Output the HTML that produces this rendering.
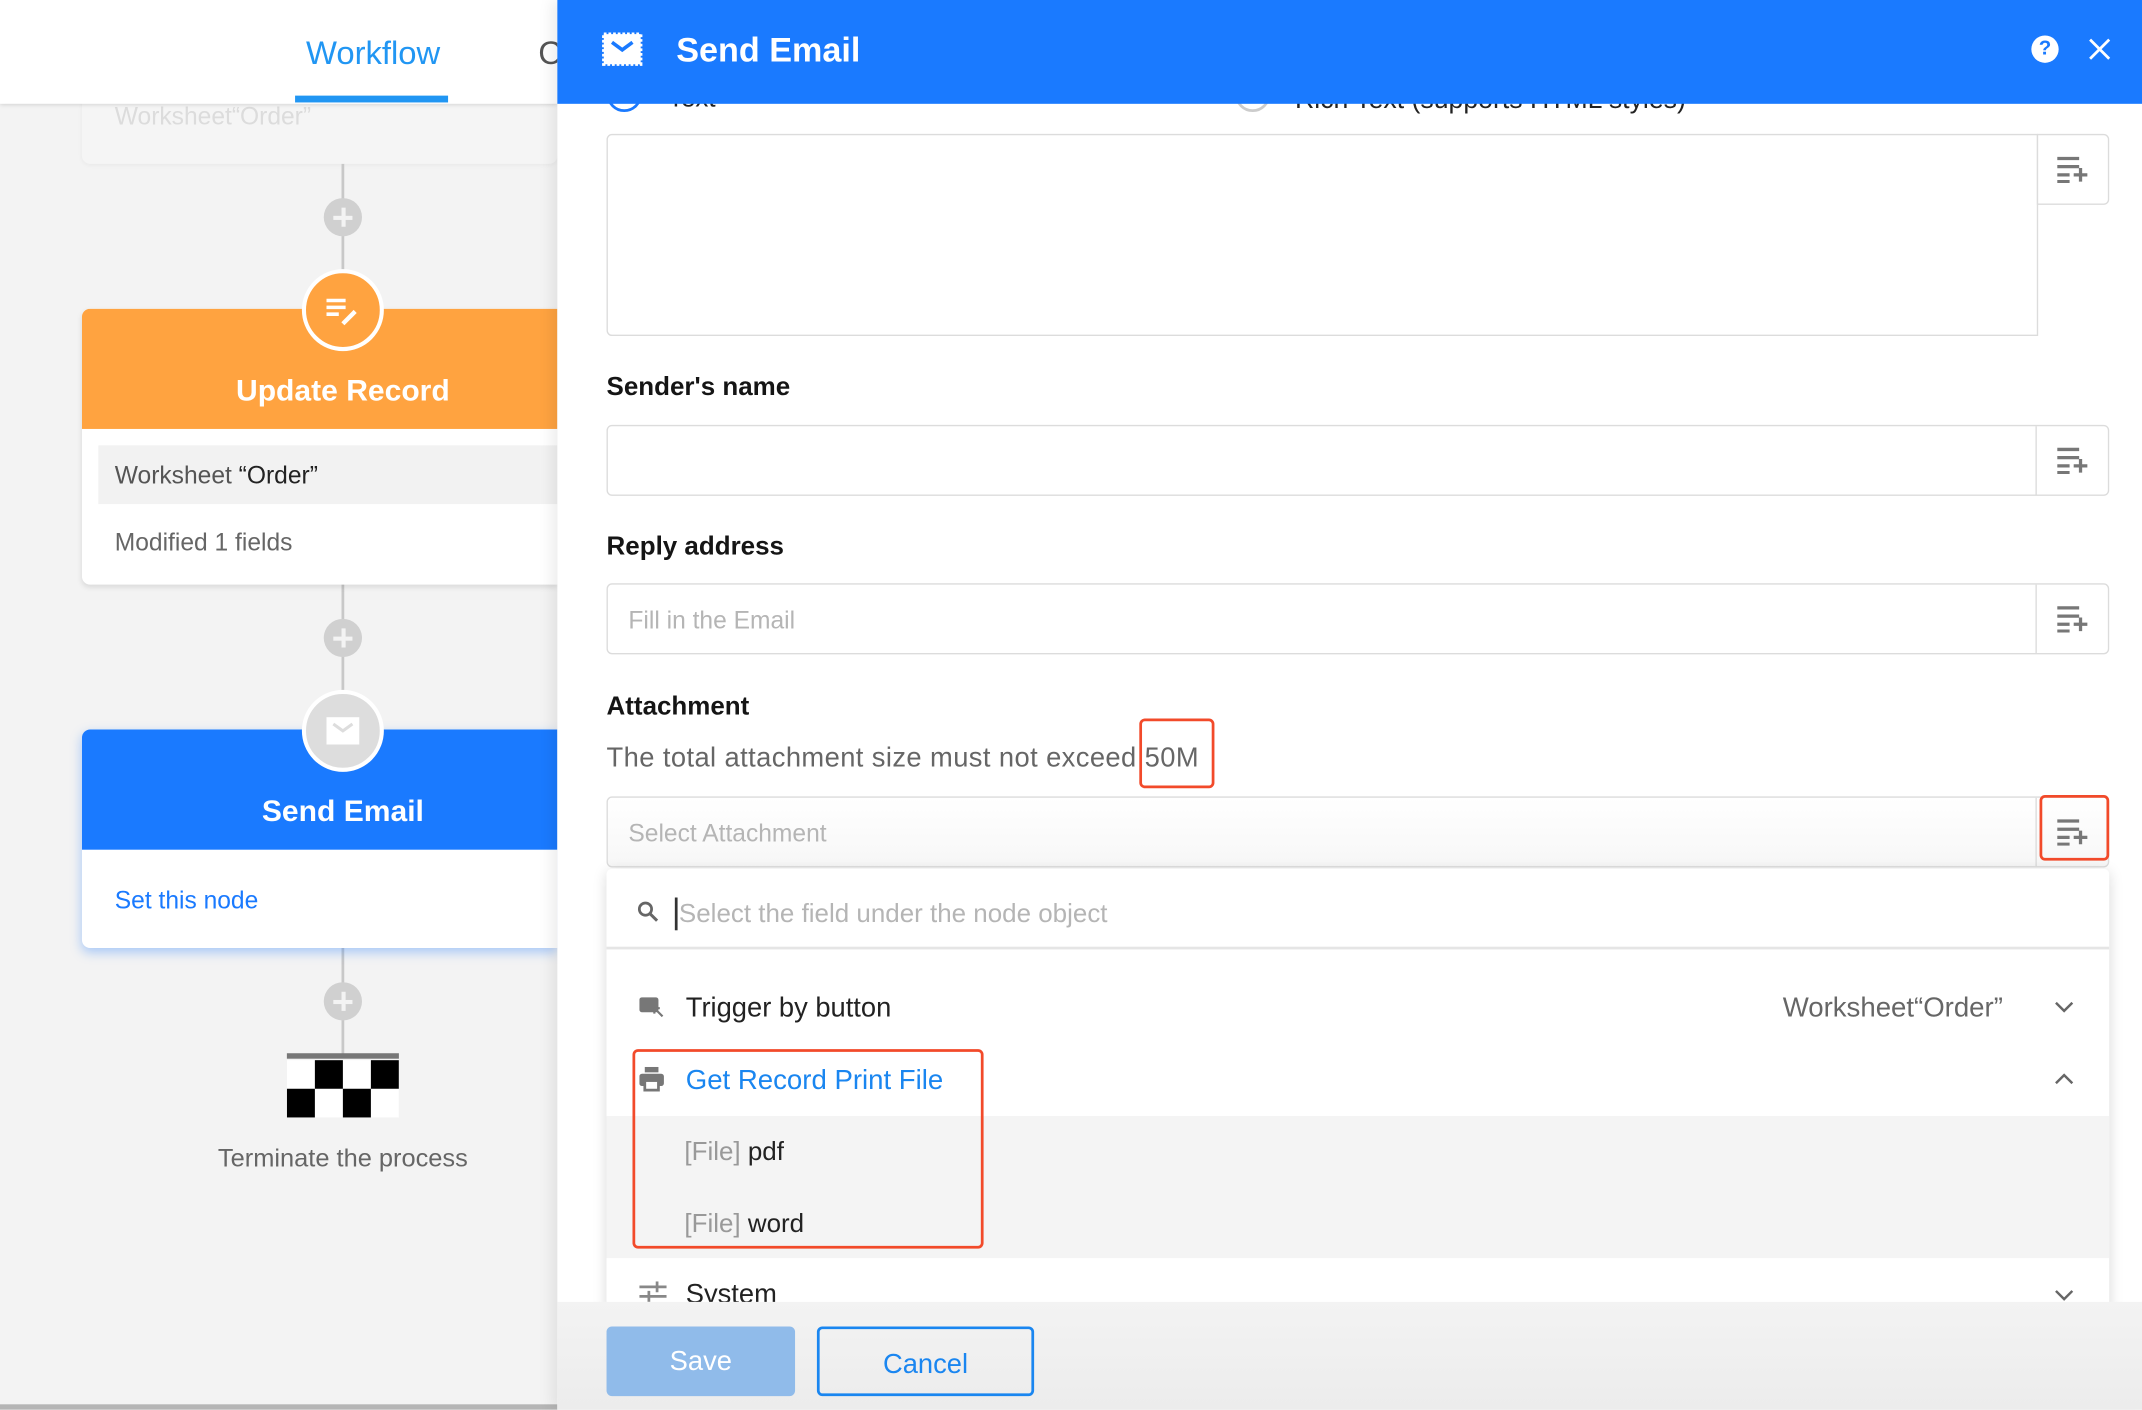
<!DOCTYPE html>
<html><head><meta charset="utf-8"><style>
*{margin:0;padding:0;box-sizing:border-box}
html,body{width:2142px;height:1410px;overflow:hidden;background:#f3f3f3}
#s{position:absolute;left:0;top:0;width:1568px;height:1032px;transform:scale(1.36607);transform-origin:0 0;font-family:"Liberation Sans",Arial,sans-serif;overflow:hidden}
.a{position:absolute}
.t{position:absolute;white-space:nowrap}
.plus{position:absolute;width:28px;height:28px;border-radius:50%;background:#d0d0d0}
.plus:before,.plus:after{content:"";position:absolute;background:#f3f3f3}
.plus:before{left:7px;top:12.5px;width:14px;height:3px}
.plus:after{left:12.5px;top:7px;width:3px;height:14px}
.inp{position:absolute;left:444px;width:1100px;border:1.5px solid #dcdcdc;border-radius:4px;background:#fff}
.btn{position:absolute;right:0;top:0;width:53px;height:50px;border-left:1.5px solid #dcdcdc}
.lab{font-size:19px;font-weight:bold;color:#151515}
.ph{font-size:18px;color:#b5b5b5}
</style></head><body><div id="s">
<!-- left -->
<div class="a" style="left:0;top:0;width:408px;height:1032px;background:#f3f3f3"></div>
<div class="a" style="left:60px;top:60px;width:348px;height:60px;background:#f5f5f5;border-radius:6px;box-shadow:0 1px 3px rgba(0,0,0,.04)"></div>
<div class="t" style="left:84px;top:75px;font-size:18px;color:#dcdcdc">Worksheet“Order”</div>
<div class="a" style="left:250px;top:120px;width:1.5px;height:600px;background:#c8c8c8"></div>
<div class="a" style="left:250px;top:740px;width:1.5px;height:32px;background:#c8c8c8"></div>
<div class="a" style="left:0;top:0;width:408px;height:76px;background:#fff;box-shadow:0 1px 3px rgba(0,0,0,.15)"></div>
<div class="t" style="left:224px;top:26px;font-size:24px;color:#2196f3">Workflow</div>
<div class="a" style="left:216px;top:70px;width:112px;height:5px;background:#2196f3"></div>
<div class="t" style="left:394px;top:26px;font-size:24px;color:#555">C</div>
<div class="plus" style="left:237px;top:145px"></div>
<!-- update card -->
<div class="a" style="left:60px;top:226px;width:348px;height:202px;background:#fff;border-radius:6px 0 0 6px;box-shadow:0 2px 4px rgba(0,0,0,.1);overflow:hidden">
 <div class="a" style="left:0;top:0;width:348px;height:88px;background:#ffa340"></div>
 <div class="t" style="left:0;width:382px;text-align:center;top:47px;font-size:22px;font-weight:bold;color:#fff">Update Record</div>
 <div class="a" style="left:12px;top:100px;width:336px;height:43px;background:#f2f2f2"></div>
 <div class="t" style="left:24px;top:112px;font-size:18px;color:#555">Worksheet <span style="color:#222">“Order”</span></div>
 <div class="t" style="left:24px;top:161px;font-size:18px;color:#666">Modified 1 fields</div>
</div>
<div class="a" style="left:221px;top:197px;width:60px;height:60px;border-radius:50%;background:#ffa340;border:3px solid #fff"></div>
<svg class="a" style="left:236px;top:212px" width="30" height="30" viewBox="0 0 30 30"><path d="M3 8h14M3 13h14M3 18h9" stroke="#fff" stroke-width="2.6"/><path d="M15 25l9-9" stroke="#fff" stroke-width="3.2"/></svg>
<div class="plus" style="left:237px;top:453px"></div>
<!-- send email card -->
<div class="a" style="left:60px;top:534px;width:348px;height:160px;background:#fff;border-radius:6px 0 0 6px;box-shadow:0 3px 8px rgba(30,120,255,.35);overflow:hidden">
 <div class="a" style="left:0;top:0;width:348px;height:88px;background:#1a7aff"></div>
 <div class="t" style="left:0;width:382px;text-align:center;top:47px;font-size:22px;font-weight:bold;color:#fff">Send Email</div>
 <div class="t" style="left:24px;top:115px;font-size:18px;color:#1a7aff">Set this node</div>
</div>
<div class="a" style="left:221px;top:505px;width:60px;height:60px;border-radius:50%;background:#ddd;border:3px solid #fff"></div>
<svg class="a" style="left:238px;top:524px" width="26" height="22" viewBox="0 0 26 22"><rect x="1" y="1" width="24" height="20" fill="#fff"/><path d="M6 6l7 5 7-5" stroke="#ddd" stroke-width="2.2" fill="none"/></svg>
<div class="plus" style="left:237px;top:719px"></div>
<div class="a" style="left:210px;top:771px;width:82px;height:4px;background:#777"></div>
<svg class="a" style="left:210px;top:776px" width="82" height="42"><rect width="82" height="42" fill="#fff"/><rect x="20.5" y="0" width="20.5" height="21" fill="#000"/><rect x="61.5" y="0" width="20.5" height="21" fill="#000"/><rect x="0" y="21" width="20.5" height="21" fill="#000"/><rect x="41" y="21" width="20.5" height="21" fill="#000"/></svg>
<div class="t" style="left:0;width:502px;text-align:center;top:837px;font-size:18.6px;color:#666">Terminate the process</div>
<div class="a" style="left:0;top:1028px;width:408px;height:4px;background:#b5b5b5"></div>

<!-- right panel -->
<div class="a" style="left:408px;top:0;width:1160px;height:1032px;background:#fff;box-shadow:-4px 0 10px rgba(0,0,0,.08)"></div>
<div class="a" style="left:444px;top:56px;width:26px;height:26px;border-radius:50%;border:2px solid #1a7aff"></div>
<div class="t" style="left:489px;top:62px;font-size:19px;color:#222">Text</div>
<div class="a" style="left:904px;top:56px;width:26px;height:26px;border-radius:50%;border:2px solid #ccc"></div>
<div class="t" style="left:948px;top:62px;font-size:19.5px;color:#222">Rich Text (supports HTML styles)</div>
<div class="a" style="left:408px;top:0;width:1160px;height:76px;background:#1a7aff"></div>
<svg class="a" style="left:440px;top:23px" width="31" height="26" viewBox="0 0 31 26"><path d="M2 2h27v22H2z" fill="#fff" stroke="#fff" stroke-width="2.5" stroke-dasharray="2 1.4"/><path d="M8 8l7.5 5.5L23 8" stroke="#1a7aff" stroke-width="2.6" fill="none"/></svg>
<div class="t" style="left:495px;top:23px;font-size:25px;font-weight:bold;color:#fff">Send Email</div>
<div class="a" style="left:1487px;top:26px;width:20px;height:20px;border-radius:50%;background:#fff;color:#1a7aff;font-size:15px;font-weight:bold;text-align:center;line-height:20px">?</div>
<svg class="a" style="left:1528px;top:27px" width="18" height="18"><path d="M2 2l14 14M16 2L2 16" stroke="#fff" stroke-width="2"/></svg>

<div class="inp" style="top:98px;height:148px;width:1048px;border-radius:4px 0 0 4px"></div>
<div class="a" style="left:1491px;top:98px;width:53px;height:52px;border:1.5px solid #dcdcdc;border-radius:0 4px 4px 0;background:#fff"></div>
<div class="t lab" style="left:444px;top:273px">Sender's name</div>
<div class="inp" style="top:311px;height:52px"><div class="btn"></div></div>
<div class="t lab" style="left:444px;top:390px">Reply address</div>
<div class="inp" style="top:427px;height:52px"><div class="btn"></div></div>
<div class="t ph" style="left:460px;top:444px">Fill in the Email</div>
<div class="t lab" style="left:444px;top:507px">Attachment</div>
<div class="t" style="left:444px;top:544px;font-size:20px;letter-spacing:0.3px;color:#666">The total attachment size must not exceed 50M</div>
<div class="a" style="left:834px;top:526px;width:55px;height:51px;border:2.5px solid #f24a2a;border-radius:4px"></div>
<div class="inp" style="top:583px;height:52px;background:linear-gradient(#fff,#f7f7f7)"><div class="btn"></div></div>
<div class="t ph" style="left:460px;top:600px">Select Attachment</div>
<div class="a" style="left:1493px;top:582px;width:51px;height:48px;border:2.5px solid #f24a2a;border-radius:4px"></div>
<svg class="a" style="left:1505px;top:114px" width="24" height="20"><path d="M1 2h16M1 8h16M1 14h9M1 19h9M13 14h10M18 9v10" stroke="#777" stroke-width="2.4"/></svg>
<svg class="a" style="left:1505px;top:327px" width="24" height="20"><path d="M1 2h16M1 8h16M1 14h9M1 19h9M13 14h10M18 9v10" stroke="#777" stroke-width="2.4"/></svg>
<svg class="a" style="left:1505px;top:443px" width="24" height="20"><path d="M1 2h16M1 8h16M1 14h9M1 19h9M13 14h10M18 9v10" stroke="#777" stroke-width="2.4"/></svg>
<svg class="a" style="left:1505px;top:599px" width="24" height="20"><path d="M1 2h16M1 8h16M1 14h9M1 19h9M13 14h10M18 9v10" stroke="#777" stroke-width="2.4"/></svg>

<!-- dropdown -->
<div class="a" style="left:444px;top:636px;width:1100px;height:330px;background:#fff;border-radius:4px;box-shadow:0 2px 10px rgba(0,0,0,.15)"></div>
<svg class="a" style="left:466px;top:659px" width="16" height="18"><circle cx="6.5" cy="6.5" r="4.5" stroke="#666" stroke-width="2" fill="none"/><path d="M10 10l5 5" stroke="#666" stroke-width="2.2"/></svg>
<div class="a" style="left:494px;top:657px;width:1.5px;height:24px;background:#333"></div>
<div class="t ph" style="left:497px;top:659px;font-size:19px">Select the field under the node object</div>
<div class="a" style="left:444px;top:693px;width:1100px;height:2px;background:#e5e5e5"></div>
<svg class="a" style="left:468px;top:730px" width="20" height="16"><rect x="0" y="0" width="14" height="11" rx="2" fill="#777"/><path d="M11 8l6 6M11 8h4M11 8v4" stroke="#777" stroke-width="1.6" fill="none"/></svg>
<div class="t" style="left:502px;top:727px;font-size:20px;color:#222">Trigger by button</div>
<div class="t" style="left:1305px;top:727px;font-size:20.2px;color:#666">Worksheet“Order”</div>
<svg class="a" style="left:1503px;top:731px" width="16" height="12"><path d="M2 3l6 6 6-6" stroke="#666" stroke-width="1.8" fill="none"/></svg>
<svg class="a" style="left:468px;top:781px" width="20" height="18"><rect x="4" y="0" width="10" height="4" fill="#777"/><rect x="0" y="5" width="18" height="9" rx="2" fill="#777"/><rect x="4" y="10" width="10" height="7" fill="#fff" stroke="#777" stroke-width="2"/></svg>
<div class="t" style="left:502px;top:780px;font-size:20.2px;color:#1a86f0">Get Record Print File</div>
<svg class="a" style="left:1503px;top:784px" width="16" height="12"><path d="M2 9l6-6 6 6" stroke="#666" stroke-width="1.8" fill="none"/></svg>
<div class="a" style="left:444px;top:817px;width:1100px;height:104px;background:#f4f4f4"></div>
<div class="t" style="left:501px;top:833px;font-size:19px;color:#999">[File] <span style="color:#222">pdf</span></div>
<div class="t" style="left:501px;top:886px;font-size:19px;color:#999">[File] <span style="color:#222">word</span></div>
<div class="a" style="left:463px;top:768px;width:257px;height:146px;border:2.5px solid #f24a2a;border-radius:4px"></div>
<svg class="a" style="left:468px;top:938px" width="20" height="16"><path d="M0 4h20M0 11h20" stroke="#888" stroke-width="2"/><path d="M13 0v8M7 7v8" stroke="#888" stroke-width="2"/></svg>
<div class="t" style="left:502px;top:937px;font-size:20px;color:#222">System</div>
<svg class="a" style="left:1503px;top:942px" width="16" height="12"><path d="M2 3l6 6 6-6" stroke="#666" stroke-width="1.8" fill="none"/></svg>

<!-- footer -->
<div class="a" style="left:408px;top:953px;width:1160px;height:79px;background:linear-gradient(#f3f3f3,#ececec)"></div>
<div class="a" style="left:444px;top:971px;width:138px;height:51px;background:#90bbea;border-radius:4px;color:#fff;font-size:20px;text-align:center;line-height:53px">Save</div>
<div class="a" style="left:598px;top:971px;width:159px;height:51px;border:2px solid #1a86f0;border-radius:4px;color:#1a86f0;font-size:20px;text-align:center;line-height:53px">Cancel</div>
</div></body></html>
